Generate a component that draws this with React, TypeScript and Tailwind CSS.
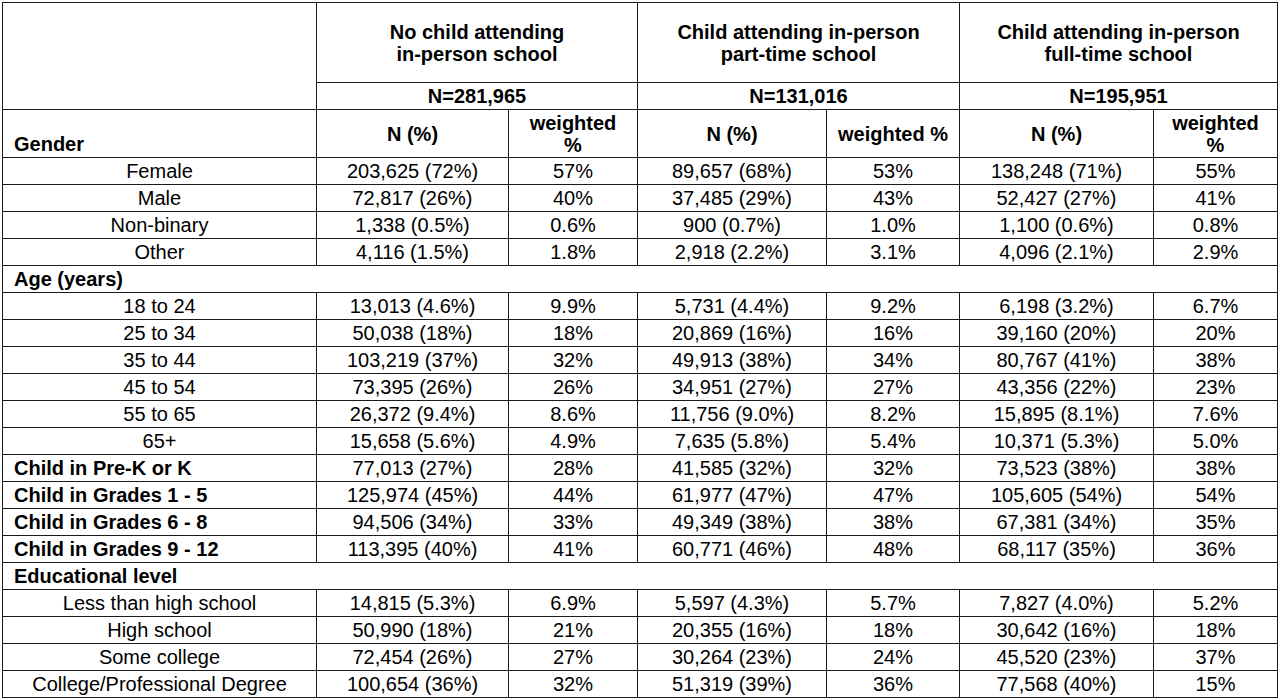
import { Fragment } from 'react';

type Row = { label: string; bold?: boolean; cells: string[] };
type Block = { title?: string; rows: Row[] };

const blocks: Block[] = [
  {
    rows: [
      { label: 'Female', cells: ['203,625 (72%)', '57%', '89,657 (68%)', '53%', '138,248 (71%)', '55%'] },
      { label: 'Male', cells: ['72,817 (26%)', '40%', '37,485 (29%)', '43%', '52,427 (27%)', '41%'] },
      { label: 'Non-binary', cells: ['1,338 (0.5%)', '0.6%', '900 (0.7%)', '1.0%', '1,100 (0.6%)', '0.8%'] },
      { label: 'Other', cells: ['4,116 (1.5%)', '1.8%', '2,918 (2.2%)', '3.1%', '4,096 (2.1%)', '2.9%'] },
    ],
  },
  {
    title: 'Age (years)',
    rows: [
      { label: '18 to 24', cells: ['13,013 (4.6%)', '9.9%', '5,731 (4.4%)', '9.2%', '6,198 (3.2%)', '6.7%'] },
      { label: '25 to 34', cells: ['50,038 (18%)', '18%', '20,869 (16%)', '16%', '39,160 (20%)', '20%'] },
      { label: '35 to 44', cells: ['103,219 (37%)', '32%', '49,913 (38%)', '34%', '80,767 (41%)', '38%'] },
      { label: '45 to 54', cells: ['73,395 (26%)', '26%', '34,951 (27%)', '27%', '43,356 (22%)', '23%'] },
      { label: '55 to 65', cells: ['26,372 (9.4%)', '8.6%', '11,756 (9.0%)', '8.2%', '15,895 (8.1%)', '7.6%'] },
      { label: '65+', cells: ['15,658 (5.6%)', '4.9%', '7,635 (5.8%)', '5.4%', '10,371 (5.3%)', '5.0%'] },
      { label: 'Child in Pre-K or K', bold: true, cells: ['77,013 (27%)', '28%', '41,585 (32%)', '32%', '73,523 (38%)', '38%'] },
      { label: 'Child in Grades 1 - 5', bold: true, cells: ['125,974 (45%)', '44%', '61,977 (47%)', '47%', '105,605 (54%)', '54%'] },
      { label: 'Child in Grades 6 - 8', bold: true, cells: ['94,506 (34%)', '33%', '49,349 (38%)', '38%', '67,381 (34%)', '35%'] },
      { label: 'Child in Grades 9 - 12', bold: true, cells: ['113,395 (40%)', '41%', '60,771 (46%)', '48%', '68,117 (35%)', '36%'] },
    ],
  },
  {
    title: 'Educational level',
    rows: [
      { label: 'Less than high school', cells: ['14,815 (5.3%)', '6.9%', '5,597 (4.3%)', '5.7%', '7,827 (4.0%)', '5.2%'] },
      { label: 'High school', cells: ['50,990 (18%)', '21%', '20,355 (16%)', '18%', '30,642 (16%)', '18%'] },
      { label: 'Some college', cells: ['72,454 (26%)', '27%', '30,264 (23%)', '24%', '45,520 (23%)', '37%'] },
      { label: 'College/Professional Degree', cells: ['100,654 (36%)', '32%', '51,319 (39%)', '36%', '77,568 (40%)', '15%'] },
    ],
  },
];

const cell = 'border border-[#1a1a1a] p-0';

export default function App() {
  return (
    <div className="min-h-screen bg-white pl-[2px] pt-[2px] font-['Liberation_Sans',Arial,sans-serif] text-[20px] text-black">
      <table className="w-[1275px] table-fixed border-collapse">
        <colgroup>
          <col className="w-[314px]" />
          <col className="w-[192px]" />
          <col className="w-[129px]" />
          <col className="w-[189px]" />
          <col className="w-[133px]" />
          <col className="w-[194px]" />
          <col className="w-[124px]" />
        </colgroup>
        <thead className="font-bold leading-[22px]">
          <tr className="h-[80px]">
            <th rowSpan={2} className={cell} />
            <th colSpan={2} className={`${cell} text-center`}>
              No child attending
              <br />
              in-person school
            </th>
            <th colSpan={2} className={`${cell} text-center`}>
              Child attending in-person
              <br />
              part-time school
            </th>
            <th colSpan={2} className={`${cell} text-center`}>
              Child attending in-person
              <br />
              full-time school
            </th>
          </tr>
          <tr className="h-[27px]">
            <th colSpan={2} className={`${cell} text-center`}>N=281,965</th>
            <th colSpan={2} className={`${cell} text-center`}>N=131,016</th>
            <th colSpan={2} className={`${cell} text-center`}>N=195,951</th>
          </tr>
          <tr className="h-[48px]">
            <th className={`${cell} pb-[2px] pl-[11px] text-left align-bottom`}>Gender</th>
            <th className={`${cell} text-center`}>N (%)</th>
            <th className={`${cell} text-center`}>
              weighted
              <br />%
            </th>
            <th className={`${cell} text-center`}>N (%)</th>
            <th className={`${cell} text-center`}>weighted %</th>
            <th className={`${cell} text-center`}>N (%)</th>
            <th className={`${cell} text-center`}>
              weighted
              <br />%
            </th>
          </tr>
        </thead>
        <tbody className="leading-[22px]">
          {blocks.map((b, bi) => (
            <Fragment key={bi}>
              {b.title && (
                <tr className="h-[27px]">
                  <td colSpan={7} className={`${cell} pl-[11px] text-left font-bold`}>
                    {b.title}
                  </td>
                </tr>
              )}
              {b.rows.map((r) => (
                <tr key={r.label} className="h-[27px]">
                  <td className={`${cell} ${r.bold ? 'pl-[11px] text-left font-bold' : 'text-center'}`}>{r.label}</td>
                  {r.cells.map((c, i) => (
                    <td key={i} className={`${cell} text-center`}>
                      {c}
                    </td>
                  ))}
                </tr>
              ))}
            </Fragment>
          ))}
        </tbody>
      </table>
    </div>
  );
}
